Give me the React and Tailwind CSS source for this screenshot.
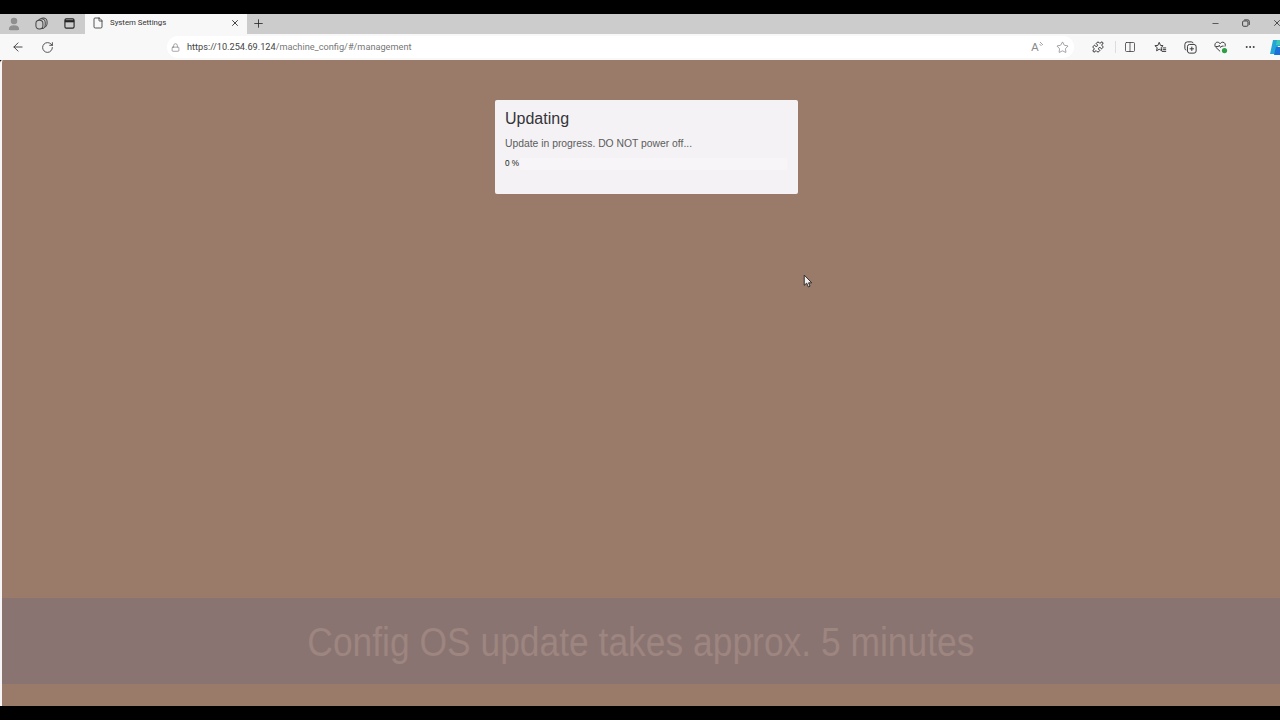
import React from 'react';
import { ArrowLeft, Columns2, File, Lock, Minus, MoreHorizontal, Plus, Puzzle, RotateCw, Star, X } from 'lucide-react';

// small toolbar glyphs that lucide has no close match for
const Profile = () => (
  <svg width="12" height="15" viewBox="0 0 14 16" className="text-[#8f8f8f]" fill="currentColor">
    <circle cx="7" cy="5" r="3.8" />
    <path d="M1 15c0-3.6 2-5 6-5s6 1.4 6 5c0 .6-1 1-6 1s-6-.4-6-1z" />
  </svg>
);

const Workspaces = () => (
  <svg width="13" height="13" viewBox="0 0 14 14" fill="none" stroke="#444" strokeWidth="1.1">
    <rect x="5" y="1" width="8" height="10" rx="4" />
    <rect x="3" y="2" width="8" height="10.500" rx="4" fill="#ccc" />
    <rect x="1" y="3.500" width="7.500" height="9.500" rx="3.500" fill="#ccc" />
  </svg>
);

const VerticalTabs = () => (
  <svg width="11" height="11" viewBox="0 0 12 12" fill="none" stroke="#222" strokeWidth="1.2">
    <rect x="1" y="1" width="10" height="10" rx="1.5" />
    <path d="M1 3.5h10" strokeWidth="2.4" />
  </svg>
);

const Restore = () => (
  <svg width="8" height="8" viewBox="0 0 9 9" fill="none" stroke="#333" strokeWidth="1">
    <rect x="0.7" y="2.2" width="6" height="6" rx="1.2" />
    <path d="M2.5 1h4a1.7 1.7 0 0 1 1.7 1.7v4" />
  </svg>
);

const ReadAloud = () => (
  <span className="relative font-['Liberation_Sans',sans-serif] text-[11px] leading-none text-[#8c8c8c]">
    A
    <svg width="5" height="7" viewBox="0 0 5 7" fill="none" stroke="#8c8c8c" strokeWidth="0.8" className="absolute -right-[5px] -top-[1px]">
      <path d="M1 1l3 3M0.5 3l2 2" />
    </svg>
  </span>
);

const Favorites = () => (
  <svg width="13" height="13" viewBox="0 0 15 14" fill="none" stroke="#333" strokeWidth="1.1" strokeLinejoin="round">
    <path d="M6 1l1.5 3.6 3 .3-2.3 2.2.7 3.6L6 9l-3 1.8.7-3.6L1 4.9l3.5-.3z" />
    <path d="M10 7.5h4M10 9.5h4M9 11.5h5" />
  </svg>
);

const Collections = () => (
  <svg width="13" height="13" viewBox="0 0 15 15" fill="none" stroke="#333" strokeWidth="1.1">
    <rect x="4" y="4" width="10" height="10" rx="2.5" />
    <path d="M2.6 10.5A2 2 0 0 1 1 8.5V4a3 3 0 0 1 3-3h4.5a2 2 0 0 1 2 1.6M9 6.5v5M6.5 9h5" />
  </svg>
);

const Health = () => (
  <svg width="14" height="14" viewBox="0 0 16 15" fill="none" stroke="#333" strokeWidth="1.1">
    <path d="M7 12.500L2 7.800C.2 6 1 2 4 2c1.400 0 2.400.8 3 1.800C7.600 2.800 8.600 2 10 2c2.600 0 3.600 3 2.500 5" />
    <path d="M2 7h3l1-1.500L7.500 8 9 6.500h2" />
    <circle cx="12" cy="11.500" r="3" fill="#2f9e44" stroke="none" />
  </svg>
);

const Copilot = () => (
  <svg width="13" height="16" viewBox="0 0 13 16">
    <path d="M3 1h10v6H8L6 15H0z" fill="#23a6d5" />
    <path d="M6 8h7l-2 8H4z" fill="#1b6fd8" />
    <path d="M7 1h6L11 6H6z" fill="#3cc7b4" />
  </svg>
);

const Cursor = () => (
  <svg width="10" height="14" viewBox="0 0 9 13">
    <path d="M1 1v9.500l2.300-2 1.500 3.500 1.600-.7L5 8.200h3z" fill="#f4efec" stroke="#2a2a2a" strokeWidth="0.9" />
  </svg>
);

const App = () => {
  return (
    <div className="flex h-[720px] w-[1280px] flex-col overflow-hidden bg-black font-['Liberation_Sans',sans-serif]">
      {/* Barra de pestañas */}
      <div className="mt-[14px] flex h-[20px] items-center bg-[#cccccc]">
        <div className="flex h-full w-[85px] items-center pb-[2px] pl-[8px]">
          <Profile />
          <div className="ml-[15px]"><Workspaces /></div>
          <div className="ml-[16px]"><VerticalTabs /></div>
        </div>
        <div className="flex h-full w-[162px] items-center bg-[#f9f8f8] pb-[2px] pl-[7px] pr-[7px]">
          <File size={12} strokeWidth={1.5} className="text-[#222]" />
          <span className="ml-[6px] flex-1 font-['Roboto',sans-serif] text-[7.800px] text-[#333]">System Settings</span>
          <X size={10} strokeWidth={2} className="text-[#222]" />
        </div>
        <Plus size={13} strokeWidth={1.5} className="mb-[2px] ml-[5px] text-[#222]" />
        <div className="mb-[2px] ml-auto flex items-center">
          <Minus size={9} className="mr-[22px] text-[#333]" />
          <Restore />
          <X size={10} className="ml-[22px] mr-[-2px] text-[#333]" />
        </div>
      </div>

      {/* Barra de direcciones */}
      <div className="flex h-[26px] items-center bg-[#f9f8f8]">
        <ArrowLeft size={14} strokeWidth={1.5} className="ml-[11px] shrink-0 text-[#333]" />
        <RotateCw size={13} strokeWidth={1.5} className="ml-[16px] shrink-0 text-[#333]" />
        <div className="ml-[113px] flex h-[22px] w-[907px] shrink-0 items-center rounded-full bg-white pl-[4px]">
          <Lock size={9} strokeWidth={1.5} className="text-[#666]" />
          <span className="ml-[7px] font-['Roboto',sans-serif] text-[9.200px] text-[#777]">
            <span className="text-[#444]">https://10.254.69.124</span>/machine_config/#/management
          </span>
          <div className="ml-auto mr-[5.500px] flex items-center gap-[17px]">
            <ReadAloud />
            <Star size={13} strokeWidth={1} className="text-[#555]" />
          </div>
        </div>
        <Puzzle size={12} strokeWidth={2} className="ml-[18px] shrink-0 text-[#333]" />
        <div className="ml-[11px] h-[12px] w-px shrink-0 bg-[#ddd]" />
        <Columns2 size={12} strokeWidth={1.5} className="ml-[8px] shrink-0 text-[#333]" />
        <div className="ml-[18px] shrink-0"><Favorites /></div>
        <div className="ml-[17px] shrink-0"><Collections /></div>
        <div className="ml-[17px] shrink-0"><Health /></div>
        <MoreHorizontal size={12} className="ml-[16px] shrink-0 text-[#333]" />
        <div className="ml-[14px] shrink-0"><Copilot /></div>
      </div>

      {/* Contenido de la página */}
      <div className="relative flex flex-1 flex-col rounded-tl-[3px] bg-[#9a7b69] border-l-2 border-l-[#f7f5f6]">
        <div className="ml-[492.500px] mt-[40px] h-[94px] w-[303px] rounded-[2px] bg-[#f4f2f4] px-[10.500px] pt-[9px]">
          <h1 className="text-[16px] leading-[20px] text-[#34343a]">Updating</h1>
          <p className="mt-[8px] text-[10.350px] leading-[14px] text-[#5c5c5c]">Update in progress. DO NOT power off...</p>
          <div className="mt-[7px] flex h-[12px] items-center">
            <span className="w-[14px] whitespace-nowrap text-[8.200px] leading-[10px] text-[#222]">0 %</span>
            <div className="ml-[1px] h-[12px] flex-1 bg-[#f7f5f7]" />
          </div>
        </div>

        <div className="absolute left-[801px] top-[214px]"><Cursor /></div>

        <div className="mb-[22px] mt-auto flex h-[86px] items-center justify-center bg-[#8a7471] pt-[2px]">
          <span className="inline-block scale-x-[0.885] text-[40px] text-[#9d8580]">Config OS update takes approx. 5 minutes</span>
        </div>
      </div>
      <div className="h-[14px] bg-black" />
    </div>
  );
};

export default App;
